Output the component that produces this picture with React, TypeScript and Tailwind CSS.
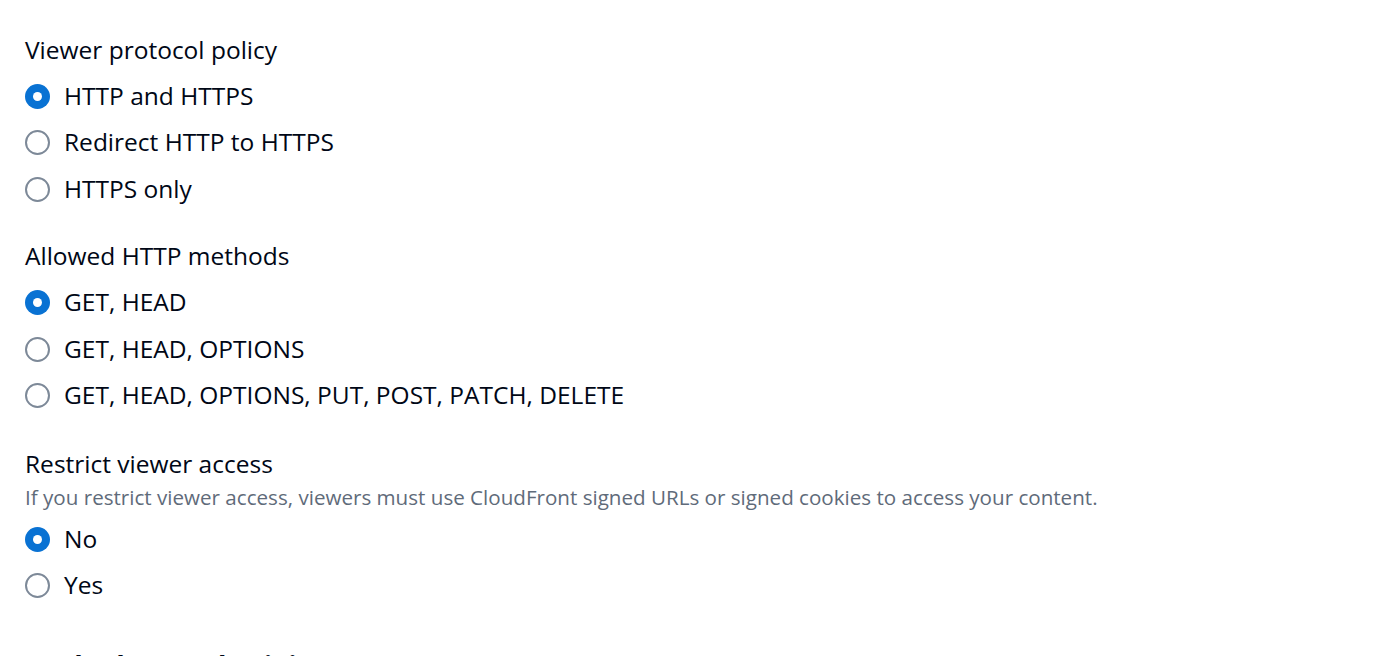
import React from "react";

type Opt = { label: string; checked?: boolean };

function Radio({ checked }: { checked?: boolean }) {
  if (checked) {
    return (
      <span className="flex h-[25px] w-[25px] shrink-0 items-center justify-center rounded-full bg-[#0972d3]">
        <span className="h-[9px] w-[9px] rounded-full bg-white" />
      </span>
    );
  }
  return <span className="h-[25px] w-[25px] shrink-0 rounded-full border-2 border-[#7d8998] bg-white" />;
}

function Option({ label, checked }: Opt) {
  return (
    <div className="flex h-[46.5px] items-center gap-[14px]">
      <Radio checked={checked} />
      <span className="text-[24.5px] text-[#000716]">{label}</span>
    </div>
  );
}

export default function App() {
  const font = { fontFamily: '"Open Sans", "Noto Sans", sans-serif' };
  return (
    <div className="h-[656px] w-[1400px] overflow-hidden bg-white pl-[25px] pt-[27px]" style={font}>
      <div>
        <div className="flex h-[46px] items-center text-[24.5px] text-[#000716]">Viewer protocol policy</div>
        <Option label="HTTP and HTTPS" checked />
        <Option label="Redirect HTTP to HTTPS" />
        <Option label="HTTPS only" />
      </div>
      <div className="mt-[21px]">
        <div className="flex h-[46px] items-center text-[24.5px] text-[#000716]">Allowed HTTP methods</div>
        <Option label="GET, HEAD" checked />
        <Option label="GET, HEAD, OPTIONS" />
        <Option label="GET, HEAD, OPTIONS, PUT, POST, PATCH, DELETE" />
      </div>
      <div className="mt-[25px]">
        <div className="flex h-[40px] items-center text-[24.5px] text-[#000716]">Restrict viewer access</div>
        <div className="flex h-[26px] items-center text-[20.6px] text-[#5f6b7a]">
          If you restrict viewer access, viewers must use CloudFront signed URLs or signed cookies to access your content.
        </div>
        <div className="mt-[6px]">
          <Option label="No" checked />
          <Option label="Yes" />
        </div>
      </div>
      <div className="mt-[37px] text-[28px] font-bold leading-[40px] text-[#000716]">Cache key and origin requests</div>
    </div>
  );
}
